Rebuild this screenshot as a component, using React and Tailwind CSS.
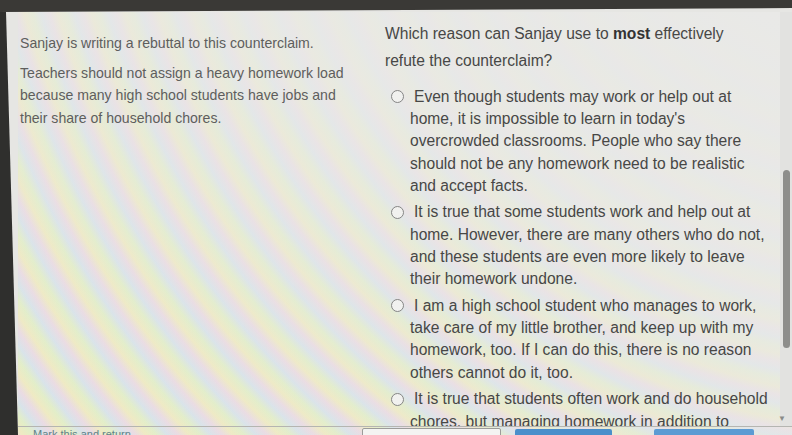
import React from "react";

const options = [
  "Even though students may work or help out at home, it is impossible to learn in today's overcrowded classrooms. People who say there should not be any homework need to be realistic and accept facts.",
  "It is true that some students work and help out at home. However, there are many others who do not, and these students are even more likely to leave their homework undone.",
  "I am a high school student who manages to work, take care of my little brother, and keep up with my homework, too. If I can do this, there is no reason others cannot do it, too.",
  "It is true that students often work and do household chores, but managing homework in addition to these responsibilities can be difficult for many students.",
];

const App = () => {
  return (
    <div className="w-[792px] h-[435px] overflow-hidden flex flex-col bg-[#e6e6e3] font-['Liberation_Sans',Arial,sans-serif]">
      {/* top bezel */}
      <div className="h-[12px] shrink-0 bg-[#3a3936] [clip-path:polygon(0_0,100%_0,100%_8px,0_12px)]"></div>

      <div className="flex flex-1 min-h-0">
        {/* left bezel */}
        <div className="w-[18px] shrink-0 bg-[#2f2f2d] [clip-path:polygon(0_0,6px_0,18px_100%,0_100%)]"></div>

        <div className="flex-1 min-w-0 flex flex-col bg-[image:linear-gradient(to_bottom_left,rgba(233,233,231,1)_0%,rgba(233,233,231,0.85)_35%,rgba(233,233,231,0.15)_75%,rgba(233,233,231,0)_100%),repeating-radial-gradient(circle_at_900px_-250px,#efeac2_0px,#eadbe3_8px,#d8e3ea_16px,#e2eec8_24px,#efeac2_32px)]">
          {/* ================= Content ================= */}
          <div className="flex h-[414px] shrink-0 overflow-hidden">
            {/* Passage */}
            <div className="w-[352px] shrink-0 pl-[2px] pr-[10px] pt-[19.5px] text-[14.1px] leading-[22.5px] text-[#5e5e5d]">
              <p className="mb-[7.5px]">
                Sanjay is writing a rebuttal to this counterclaim.
              </p>
              <p>
                Teachers should not assign a heavy homework load because many
                high school students have jobs and their share of household
                chores.
              </p>
            </div>

            {/* Question */}
            <div className="w-[410px] shrink-0 pl-[15px] pt-[7.5px] text-[15.6px] text-[#474746]">
              <p className="w-[382px] leading-[27px]">
                Which reason can Sanjay use to{" "}
                <span className="font-bold text-[#333]">most</span> effectively
                refute the counterclaim?
              </p>

              <div className="mt-[12.3px] flex flex-col gap-[4.2px]">
                {options.map((text, i) => (
                  <label key={i} className="flex leading-[22.3px]">
                    <span className="w-[25px] shrink-0 h-[22.3px] flex items-center">
                      <span className="ml-[5.5px] w-[13px] h-[13px] rounded-full border-[1.5px] border-[#858584] bg-[#f1f1ef]"></span>
                    </span>
                    <span className="w-[358px] indent-[4px]">{text}</span>
                  </label>
                ))}
              </div>
            </div>

            {/* Scrollbar */}
            <div className="w-[12px] shrink-0 flex flex-col items-start bg-[#e2e2e0]">
              <div className="ml-[3px] mt-[158px] w-[7px] h-[178px] rounded-full bg-[#8d8d8b]"></div>
              <div className="flex-1"></div>
              <span className="ml-[-2px] mb-[2px] text-[8px] leading-[10px] text-[#8a8a88]">
                ▼
              </span>
            </div>
          </div>

          {/* ================= Footer ================= */}
          <div className="border-t border-[#b5b5b1] flex-1 flex items-start pl-[15px] pt-[1px]">
            <span className="w-[329px] shrink-0 text-[11px] leading-[13px] text-[#5f8288]">
              Mark this and return
            </span>
            <div className="w-[139px] h-[20px] shrink-0 rounded-[2px] border border-[#9c9c9a] bg-[#f4f4f2]"></div>
            <div className="ml-[14px] w-[97px] h-[20px] shrink-0 mt-[1px] rounded-[2px] bg-[#4a8fcb]"></div>
            <div className="ml-[42px] w-[100px] h-[20px] shrink-0 mt-[1px] rounded-[2px] bg-[#5c9bd3]"></div>
          </div>
        </div>
      </div>
    </div>
  );
};

export default App;
